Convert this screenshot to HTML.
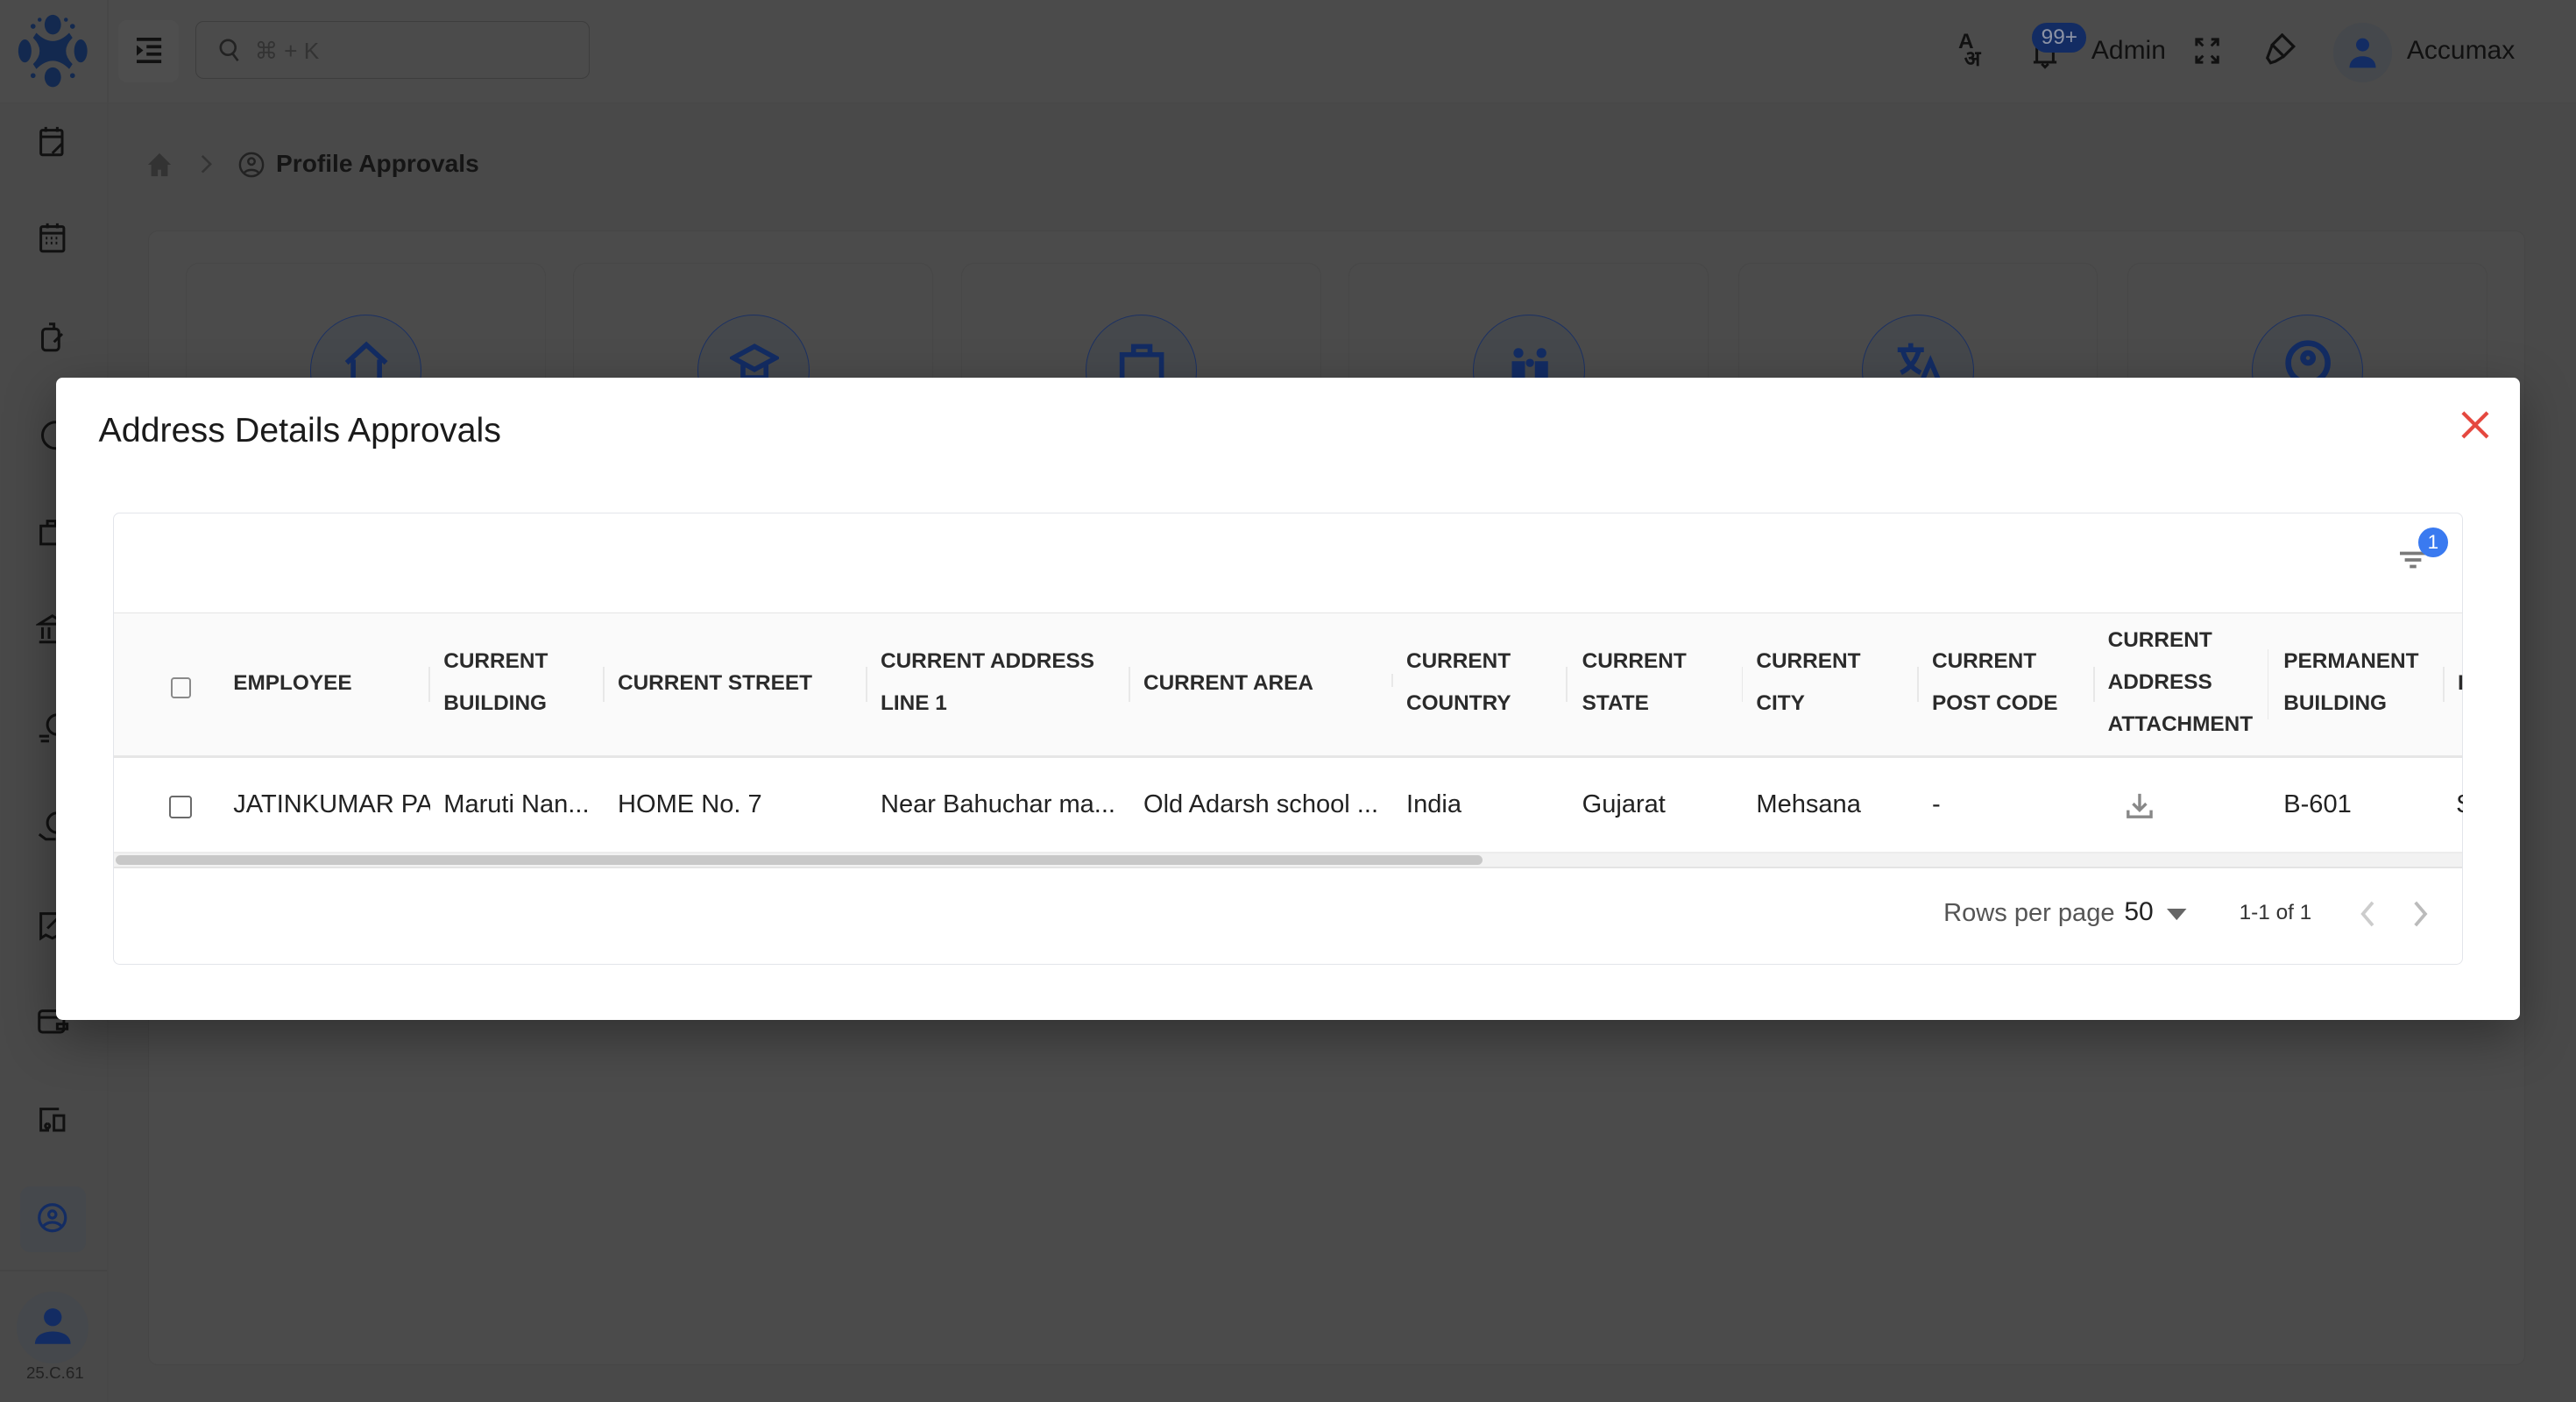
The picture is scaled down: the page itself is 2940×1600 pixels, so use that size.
<!DOCTYPE html>
<html><head><meta charset="utf-8"><style>
*{box-sizing:border-box;margin:0;padding:0}
html,body{width:2940px;height:1600px;overflow:hidden;background:#494949}
#w{zoom:1.875;width:1568px;height:854px;position:relative;font-family:"Liberation Sans",sans-serif;background:#494949;overflow:hidden}
.a{position:absolute}
.ic{position:absolute;left:22px;width:20px;height:20px}
.card{position:absolute;top:160px;width:219px;height:90px;border:1px solid #474747;border-radius:8px;background:#4b4b4b}
.circ{position:absolute;left:75px;top:31px;width:68px;height:68px;border-radius:50%;border:1px solid #1c3163;background:#45484c}
.circ svg{position:absolute;left:19px;top:14px}
.h{position:absolute;font-size:13px;font-weight:700;color:#2b2b2b;line-height:25.5px;letter-spacing:0}
.d{position:absolute;top:481px;font-size:15.5px;color:#222;white-space:nowrap}
.sep{position:absolute;top:406px;width:1px;height:21px;background:#e8e8e8}
.cb{position:absolute;width:13px;height:13px;border:1.5px solid #7a7a7a;border-radius:2px}
</style></head><body><div id="w">
<div class="a" style="left:0;top:0;width:1568px;height:63px;background:#4b4b4b;border-bottom:1px solid #474747"></div>
<div class="a" style="left:65px;top:0;width:1px;height:854px;background:#474747"></div>
<svg class="a" style="left:10px;top:8px" width="44" height="46" viewBox="0 0 44 46"><g fill="#13294f"><ellipse cx="22" cy="7" rx="5" ry="6"/><ellipse cx="22" cy="39" rx="5" ry="6"/><ellipse cx="5" cy="23" rx="4" ry="7"/><ellipse cx="39" cy="23" rx="4" ry="7"/><path d="M12 12 Q22 22 32 12 L34 15 Q26 23 34 31 L32 34 Q22 24 12 34 L10 31 Q18 23 10 15Z"/><circle cx="10" cy="8" r="1.5"/><circle cx="34" cy="8" r="1.5"/><circle cx="10" cy="38" r="1.5"/><circle cx="34" cy="38" r="1.5"/><circle cx="14" cy="4" r="1.2"/><circle cx="30" cy="4" r="1.2"/></g></svg>
<div class="a" style="left:72px;top:12px;width:37px;height:38px;border-radius:5px;background:#4e4e4e"></div>
<svg class="a" style="left:83px;top:23px" width="17" height="16" viewBox="0 0 17 16" fill="#111"><rect x="0" y="0" width="15" height="2"/><rect x="6" y="4.5" width="9" height="2"/><rect x="6" y="9" width="9" height="2"/><rect x="0" y="13.5" width="15" height="2"/><path d="M0 4.5 L4 7.7 L0 11Z"/></svg>
<div class="a" style="left:119px;top:13px;width:240px;height:35px;border:1px solid #3d3d3d;border-radius:5px"></div>
<svg class="a" style="left:133px;top:23px" width="14" height="15" viewBox="0 0 14 15" fill="none" stroke="#222" stroke-width="1.4"><circle cx="6" cy="6" r="4.5"/><path d="M9 10l3 4"/></svg>
<div class="a" style="left:155px;top:23px;font-size:14px;color:#333">⌘ + K</div>
<div class="a" style="left:1192px;top:20px;font-size:13px;font-weight:700;color:#111;line-height:11px">A<br>&nbsp;अ</div>
<svg class="a" style="left:1237px;top:22px" width="16" height="20" viewBox="0 0 16 20"><path d="M3 16V8a5 5 0 0 1 10 0v8H1h14M6 17l2 2 2-2" fill="none" stroke="#111" stroke-width="1.6"/></svg>
<div class="a" style="left:1237px;top:14px;width:33px;height:18px;border-radius:9px;background:#132c63;color:#8c93a5;font-size:13px;text-align:center;line-height:18px">99+</div>
<div class="a" style="left:1273px;top:22px;font-size:16px;color:#111">Admin</div>
<svg class="a" style="left:1336px;top:23px" width="15" height="16" viewBox="0 0 15 16" fill="none" stroke="#111" stroke-width="1.6"><path d="M1 5V1h4M1 1l4 4M14 5V1h-4M14 1l-4 4M1 11v4h4M1 15l4-4M14 11v4h-4M14 15l-4-4"/></svg>
<svg class="a" style="left:1378px;top:20px" width="20" height="22" viewBox="0 0 20 22"><path d="M11 1l7 7-6 6-7-7zM5 7l-3 8 2 3 3-1 5-3" fill="none" stroke="#111" stroke-width="1.7"/></svg>
<div class="a" style="left:1420px;top:14px;width:36px;height:36px;border-radius:50%;background:#45484c"></div>
<svg class="a" style="left:1426px;top:20px" width="24" height="24" viewBox="0 0 24 24" fill="#132c63"><circle cx="12" cy="7" r="4"/><path d="M4 21c0-5 4-7 8-7s8 2 8 7z"/></svg>
<div class="a" style="left:1465px;top:22px;font-size:16px;color:#111">Accumax</div>
<svg class="a" style="left:89px;top:92px" width="16" height="16" viewBox="0 0 16 16" fill="#333"><path d="M8 1L1 8h2v7h4v-4h2v4h4V8h2z"/></svg>
<svg class="a" style="left:121px;top:94px" width="8" height="12" viewBox="0 0 8 12" fill="none" stroke="#333" stroke-width="1.4"><path d="M2 1l5 5-5 5"/></svg>
<svg class="a" style="left:145px;top:92px" width="16" height="16" viewBox="0 0 16 16" fill="none" stroke="#222" stroke-width="1.3"><circle cx="8" cy="8" r="7"/><circle cx="8" cy="6" r="2"/><path d="M3.5 13c2-2.5 7-2.5 9 0"/></svg>
<div class="a" style="left:168px;top:91px;font-size:15px;font-weight:700;color:#151515">Profile Approvals</div>
<div class="a" style="left:90px;top:140px;width:1447px;height:691px;border:1px solid #464646;border-radius:6px;background:#4b4b4b"></div>
<div class="card" style="left:113px"><div class="circ"><svg width="30" height="30" viewBox="0 0 30 30" fill="none" stroke="#132c63" stroke-width="3"><path d="M3 15L15 4l12 11M7 13v15h16V13"/></svg></div></div>
<div class="card" style="left:349px"><div class="circ"><svg width="30" height="30" viewBox="0 0 30 30" fill="none" stroke="#132c63" stroke-width="3"><path d="M2 12L15 5l13 7-13 7zM8 16v8h14v-8"/></svg></div></div>
<div class="card" style="left:585px"><div class="circ"><svg width="30" height="30" viewBox="0 0 30 30" fill="none" stroke="#132c63" stroke-width="3"><rect x="3" y="10" width="24" height="17"/><path d="M10 10V5h10v5"/></svg></div></div>
<div class="card" style="left:821px"><div class="circ"><svg width="30" height="30" viewBox="0 0 30 30" fill="#132c63"><circle cx="8" cy="9" r="3"/><circle cx="22" cy="9" r="3"/><circle cx="15" cy="15" r="2.5"/><rect x="4" y="14" width="8" height="14"/><rect x="18" y="14" width="8" height="14"/></svg></div></div>
<div class="card" style="left:1058px"><div class="circ"><svg width="30" height="30" viewBox="0 0 30 30" fill="none" stroke="#132c63" stroke-width="3"><path d="M2 7h16M10 3v4M5 7c2 8 7 12 11 14M15 7c-2 8-7 12-11 14M16 28l6-14 6 14"/></svg></div></div>
<div class="card" style="left:1295px"><div class="circ"><svg width="30" height="30" viewBox="0 0 30 30" fill="none" stroke="#132c63" stroke-width="3.5"><circle cx="15" cy="15" r="12"/><circle cx="15" cy="12" r="3"/></svg></div></div>
<svg class="ic" style="top:76px" viewBox="0 0 20 20" fill="none" stroke="#111" stroke-width="1.6"><rect x="3" y="3" width="13" height="15" rx="1"/><path d="M6 1v3M13 1v3M3 7h13M10 17l6-6"/></svg>
<svg class="ic" style="top:135px" viewBox="0 0 20 20" fill="none" stroke="#111" stroke-width="1.6"><rect x="3" y="3" width="14" height="15" rx="1"/><path d="M7 1v3M13 1v3M3 7h14M6 10h1M9 10h1M12 10h1M6 13h1M9 13h1M12 13h1"/></svg>
<svg class="ic" style="top:195px" viewBox="0 0 20 20" fill="none" stroke="#111" stroke-width="1.6"><rect x="4" y="5" width="10" height="13" rx="2"/><path d="M8 2h3v3M11 13l5-5"/></svg>
<svg class="ic" style="top:255px" viewBox="0 0 20 20" fill="none" stroke="#111" stroke-width="1.6"><circle cx="12" cy="10" r="8"/></svg>
<svg class="ic" style="top:314px" viewBox="0 0 20 20" fill="none" stroke="#111" stroke-width="1.6"><rect x="3" y="6" width="14" height="11"/><path d="M7 6V3h5v3"/></svg>
<svg class="ic" style="top:373px" viewBox="0 0 20 20" fill="none" stroke="#111" stroke-width="1.6"><path d="M2 7l8-5 8 5zM4 9v7M8 9v7M2 18h16"/></svg>
<svg class="ic" style="top:433px" viewBox="0 0 20 20" fill="none" stroke="#111" stroke-width="1.6"><circle cx="13" cy="8" r="6"/><path d="M2 15h6M3 18h5"/></svg>
<svg class="ic" style="top:493px" viewBox="0 0 20 20" fill="none" stroke="#111" stroke-width="1.6"><circle cx="13" cy="8" r="6"/><path d="M2 15l4 3h6"/></svg>
<svg class="ic" style="top:553px" viewBox="0 0 20 20" fill="none" stroke="#111" stroke-width="1.6"><path d="M3 3h14v15l-3-2-4 2-4-2-3 2zM7 12l6-6"/></svg>
<svg class="ic" style="top:612px" viewBox="0 0 20 20" fill="none" stroke="#111" stroke-width="1.6"><rect x="2" y="3" width="15" height="13" rx="2"/><path d="M2 7h15M13 11h6v3h-6z"/></svg>
<svg class="ic" style="top:672px" viewBox="0 0 20 20" fill="none" stroke="#111" stroke-width="1.6"><path d="M14 3H3v13h5M11 7h6v9h-6zM7 12a1.3 1.3 0 1 0 .1 0"/></svg>
<div class="a" style="left:12px;top:722px;width:40px;height:40px;border-radius:6px;background:#45484c"></div>
<svg class="ic" style="top:731px" viewBox="0 0 20 20" fill="none" stroke="#132c63" stroke-width="1.7"><circle cx="10" cy="10" r="8"/><circle cx="10" cy="8" r="2.2"/><path d="M4.5 15c3-3 8-3 11 0"/></svg>
<div class="a" style="left:0;top:773px;width:65px;height:1px;background:#454545"></div>
<div class="a" style="left:10px;top:786px;width:44px;height:44px;border-radius:50%;background:#45484c"></div>
<svg class="a" style="left:18px;top:794px" width="28" height="26" viewBox="0 0 24 24" fill="#132c63"><circle cx="12" cy="7" r="5"/><path d="M2 22c0-5 5-7 10-7s10 2 10 7z"/></svg>
<div class="a" style="left:16px;top:830px;font-size:10px;color:#222">25.C.61</div>
<div class="a" style="left:34px;top:230px;width:1500px;height:391px;background:#fff;border-radius:4px;box-shadow:0 10px 30px rgba(0,0,0,.35)">
<div class="a" style="left:26px;top:20px;font-size:21px;color:#1a1a1a">Address Details Approvals</div>
<svg class="a" style="left:1464px;top:20px" width="17" height="17" viewBox="0 0 17 17" stroke="#e5483f" stroke-width="2.2"><path d="M1 1l15 15M16 1L1 16"/></svg>
</div>
<div class="a" style="left:69px;top:312px;width:1430px;height:275px;border:1px solid #e3e5ea;border-radius:4px;background:#fff;overflow:hidden">
<div class="a" style="left:0;top:60px;width:1430px;height:89px;background:#fafafa;border-top:1px solid #e4e4e4;border-bottom:2px solid #e6e6e6"></div>
<div class="a" style="left:0;top:206px;width:1430px;height:1px;background:#ececec"></div>
<div class="a" style="left:0;top:207px;width:1430px;height:8px;background:#f2f2f2"></div>
<div class="a" style="left:1px;top:208px;width:832px;height:6px;border-radius:3px;background:#c8c8c8"></div>
<div class="a" style="left:0;top:215px;width:1430px;height:1px;background:#e4e4e4"></div>
</div>
<svg class="a" style="left:1461px;top:333px" width="18" height="14" viewBox="0 0 18 14" fill="#7a7a7a"><rect x="0" y="3" width="16" height="2"/><rect x="3" y="7" width="10" height="2"/><rect x="6" y="11" width="4" height="2"/></svg>
<div class="a" style="left:1472px;top:321px;width:18px;height:18px;border-radius:50%;background:#3a7af0;color:#fff;font-size:12px;text-align:center;line-height:18px">1</div>
<div class="cb" style="left:104px;top:412px;width:12px;height:13px;border-color:#8a8a8a"></div>
<div class="h" style="left:142px;top:403px">EMPLOYEE</div>
<div class="sep" style="left:261px"></div>
<div class="h" style="left:270px;top:390px">CURRENT<br>BUILDING</div>
<div class="sep" style="left:367px"></div>
<div class="h" style="left:376px;top:403px">CURRENT STREET</div>
<div class="sep" style="left:527px"></div>
<div class="h" style="left:536px;top:390px">CURRENT ADDRESS<br>LINE 1</div>
<div class="sep" style="left:687px"></div>
<div class="h" style="left:696px;top:403px">CURRENT AREA</div>
<div class="sep" style="left:847px;top:410px;height:8px"></div>
<div class="h" style="left:856px;top:390px">CURRENT<br>COUNTRY</div>
<div class="sep" style="left:953px"></div>
<div class="h" style="left:963px;top:390px">CURRENT<br>STATE</div>
<div class="sep" style="left:1060px"></div>
<div class="h" style="left:1069px;top:390px">CURRENT<br>CITY</div>
<div class="sep" style="left:1167px"></div>
<div class="h" style="left:1176px;top:390px">CURRENT<br>POST CODE</div>
<div class="sep" style="left:1274px"></div>
<div class="h" style="left:1283px;top:377px">CURRENT<br>ADDRESS<br>ATTACHMENT</div>
<div class="sep" style="left:1380px;top:395px;height:43px"></div>
<div class="h" style="left:1390px;top:390px">PERMANENT<br>BUILDING</div>
<div class="sep" style="left:1487px"></div>
<div class="h" style="left:1496px;top:403px">I</div>
<div class="cb" style="left:103px;top:484px;width:14px;height:14px;border-color:#6a6a6a"></div>
<div class="d" style="left:142px;width:120px;overflow:hidden">JATINKUMAR PARMAR</div>
<div class="d" style="left:270px">Maruti Nan...</div>
<div class="d" style="left:376px">HOME No. 7</div>
<div class="d" style="left:536px">Near Bahuchar ma...</div>
<div class="d" style="left:696px">Old Adarsh school ...</div>
<div class="d" style="left:856px">India</div>
<div class="d" style="left:963px">Gujarat</div>
<div class="d" style="left:1069px">Mehsana</div>
<div class="d" style="left:1176px">-</div>
<svg class="a" style="left:1294px;top:482px" width="17" height="17" viewBox="0 0 17 17" fill="none" stroke="#888" stroke-width="1.8"><path d="M8.5 1v10M4.5 7l4 4 4-4M1.5 11v4h14v-4"/></svg>
<div class="d" style="left:1390px">B-601</div>
<div class="d" style="left:1495px;width:4px;overflow:hidden">S</div>
<div class="a" style="left:1183px;top:547px;font-size:15.5px;color:#555">Rows per page</div>
<div class="a" style="left:1293px;top:546px;font-size:16px;color:#222">50</div>
<svg class="a" style="left:1319px;top:553px" width="12" height="7" viewBox="0 0 12 7" fill="#666"><path d="M0 0h12L6 7z"/></svg>
<div class="a" style="left:1363px;top:548px;font-size:13px;color:#333">1-1 of 1</div>
<svg class="a" style="left:1436px;top:548px" width="10" height="16" viewBox="0 0 10 16" fill="none" stroke="#ccc" stroke-width="2"><path d="M8 1L2 8l6 7"/></svg>
<svg class="a" style="left:1468px;top:548px" width="10" height="16" viewBox="0 0 10 16" fill="none" stroke="#bbb" stroke-width="2"><path d="M2 1l6 7-6 7"/></svg>
</div></body></html>
